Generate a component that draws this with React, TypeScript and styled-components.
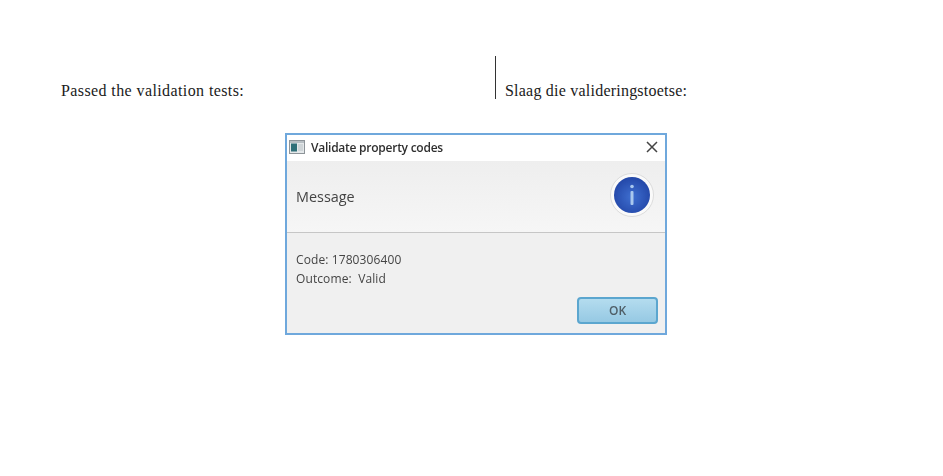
import React from "react";
import styled, { createGlobalStyle } from "styled-components";

const Global = createGlobalStyle`
  html, body { margin: 0; padding: 0; background: #fff; }
  body { width: 943px; height: 476px; overflow: hidden; }
`;

const Page = styled.div`
  width: 943px;
  height: 476px;
  display: flex;
  flex-direction: column;
  align-items: flex-start;
  padding-top: 56px;
  box-sizing: border-box;
`;

const Columns = styled.div`
  display: grid;
  grid-template-columns: 434px 1fr;
  margin-left: 61px;
  height: 43px;
`;

const Cell = styled.div<{ $ruled?: boolean; $tracking: number }>`
  display: flex;
  align-items: flex-end;
  font-family: "Liberation Serif", serif;
  font-size: 16px;
  line-height: 17px;
  letter-spacing: ${(p) => p.$tracking}px;
  color: #1a1a1a;
  ${(p) => p.$ruled && `border-left: 1px solid #333; padding-left: 9px;`}
`;

const Dialog = styled.div`
  box-sizing: border-box;
  width: 382px;
  height: 202px;
  margin: 34px 0 0 285px;
  border: 2px solid #6fa8dc;
  background: #f0f0f0;
  display: flex;
  flex-direction: column;
  font-family: "Open Sans", sans-serif;
  color: #444;
  filter: blur(0.35px);
`;

const TitleBar = styled.div`
  height: 26px;
  flex: none;
  box-sizing: border-box;
  background: #fff;
  display: flex;
  align-items: center;
  padding: 0 6px 2px 2px;
  gap: 6px;
  font-size: 12px;
  font-weight: 600;
  letter-spacing: -0.25px;
  color: #2f2f2f;
`;

const TitleText = styled.span`
  flex: 1;
`;

const Header = styled.div`
  height: 72px;
  flex: none;
  box-sizing: border-box;
  display: flex;
  align-items: center;
  justify-content: space-between;
  padding: 0 11px 0 9px;
  background: linear-gradient(#eeeeee, #f6f6f6);
  border-bottom: 1px solid #c6c6c6;
  font-size: 14.4px;
  color: #444;
`;

const Body = styled.div`
  flex: 1;
  display: flex;
  flex-direction: column;
  padding: 17px 7px 9px 9px;
  font-size: 12px;
  line-height: 19px;
  letter-spacing: 0.1px;
  color: #444;
`;

const Line = styled.div`
  white-space: pre;
`;

const Actions = styled.div`
  margin-top: auto;
  display: flex;
  justify-content: flex-end;
`;

const OkButton = styled.button`
  width: 81px;
  height: 27px;
  box-sizing: border-box;
  border: 2px solid #5ba6cf;
  border-radius: 4px;
  background: linear-gradient(#b4dcef, #96c9e3);
  font-family: "Open Sans", sans-serif;
  font-size: 12px;
  font-weight: 600;
  color: #4f5e67;
  padding: 0;
`;

const InfoGraphic = styled.svg`
  margin-top: -3px;
`;

function WindowIcon() {
  return (
    <svg width="16" height="14" viewBox="0 0 16 14">
      <rect x="0.5" y="0.5" width="15" height="13" fill="#e4e8ea" stroke="#8d9499" />
      <rect x="1" y="1" width="14" height="2" fill="#b8bfc4" />
      <rect x="2" y="3.5" width="6" height="8" fill="#2f6f78" />
      <rect x="9" y="4" width="5" height="7" fill="#cfd5d8" />
    </svg>
  );
}

function CloseIcon() {
  return (
    <svg width="14" height="14" viewBox="0 0 14 14">
      <path d="M2 2 L12 12 M12 2 L2 12" stroke="#444" strokeWidth="1.5" fill="none" />
    </svg>
  );
}

function InfoIcon() {
  return (
    <InfoGraphic width="44" height="44" viewBox="0 0 44 44">
      <defs>
        <radialGradient id="blue" cx="50%" cy="55%" r="55%">
          <stop offset="0%" stopColor="#3f6fd0" />
          <stop offset="100%" stopColor="#2347a8" />
        </radialGradient>
      </defs>
      <circle cx="22" cy="22" r="21.5" fill="#fafafa" stroke="#dcdcdc" />
      <circle cx="22" cy="22" r="18" fill="url(#blue)" />
      <circle cx="22" cy="13.5" r="1.8" fill="#a9c8ee" />
      <rect x="20.5" y="18" width="3" height="14" rx="1" fill="#a9c8ee" />
    </InfoGraphic>
  );
}

export default function App() {
  return (
    <Page>
      <Global />
      <Columns>
        <Cell $tracking={0.4}>Passed the validation tests:</Cell>
        <Cell $ruled $tracking={0.22}>Slaag die valideringstoetse:</Cell>
      </Columns>
      <Dialog>
        <TitleBar>
          <WindowIcon />
          <TitleText>Validate property codes</TitleText>
          <CloseIcon />
        </TitleBar>
        <Header>
          <span>Message</span>
          <InfoIcon />
        </Header>
        <Body>
          <Line>Code: 1780306400</Line>
          <Line>Outcome:  Valid</Line>
          <Actions>
            <OkButton>OK</OkButton>
          </Actions>
        </Body>
      </Dialog>
    </Page>
  );
}
